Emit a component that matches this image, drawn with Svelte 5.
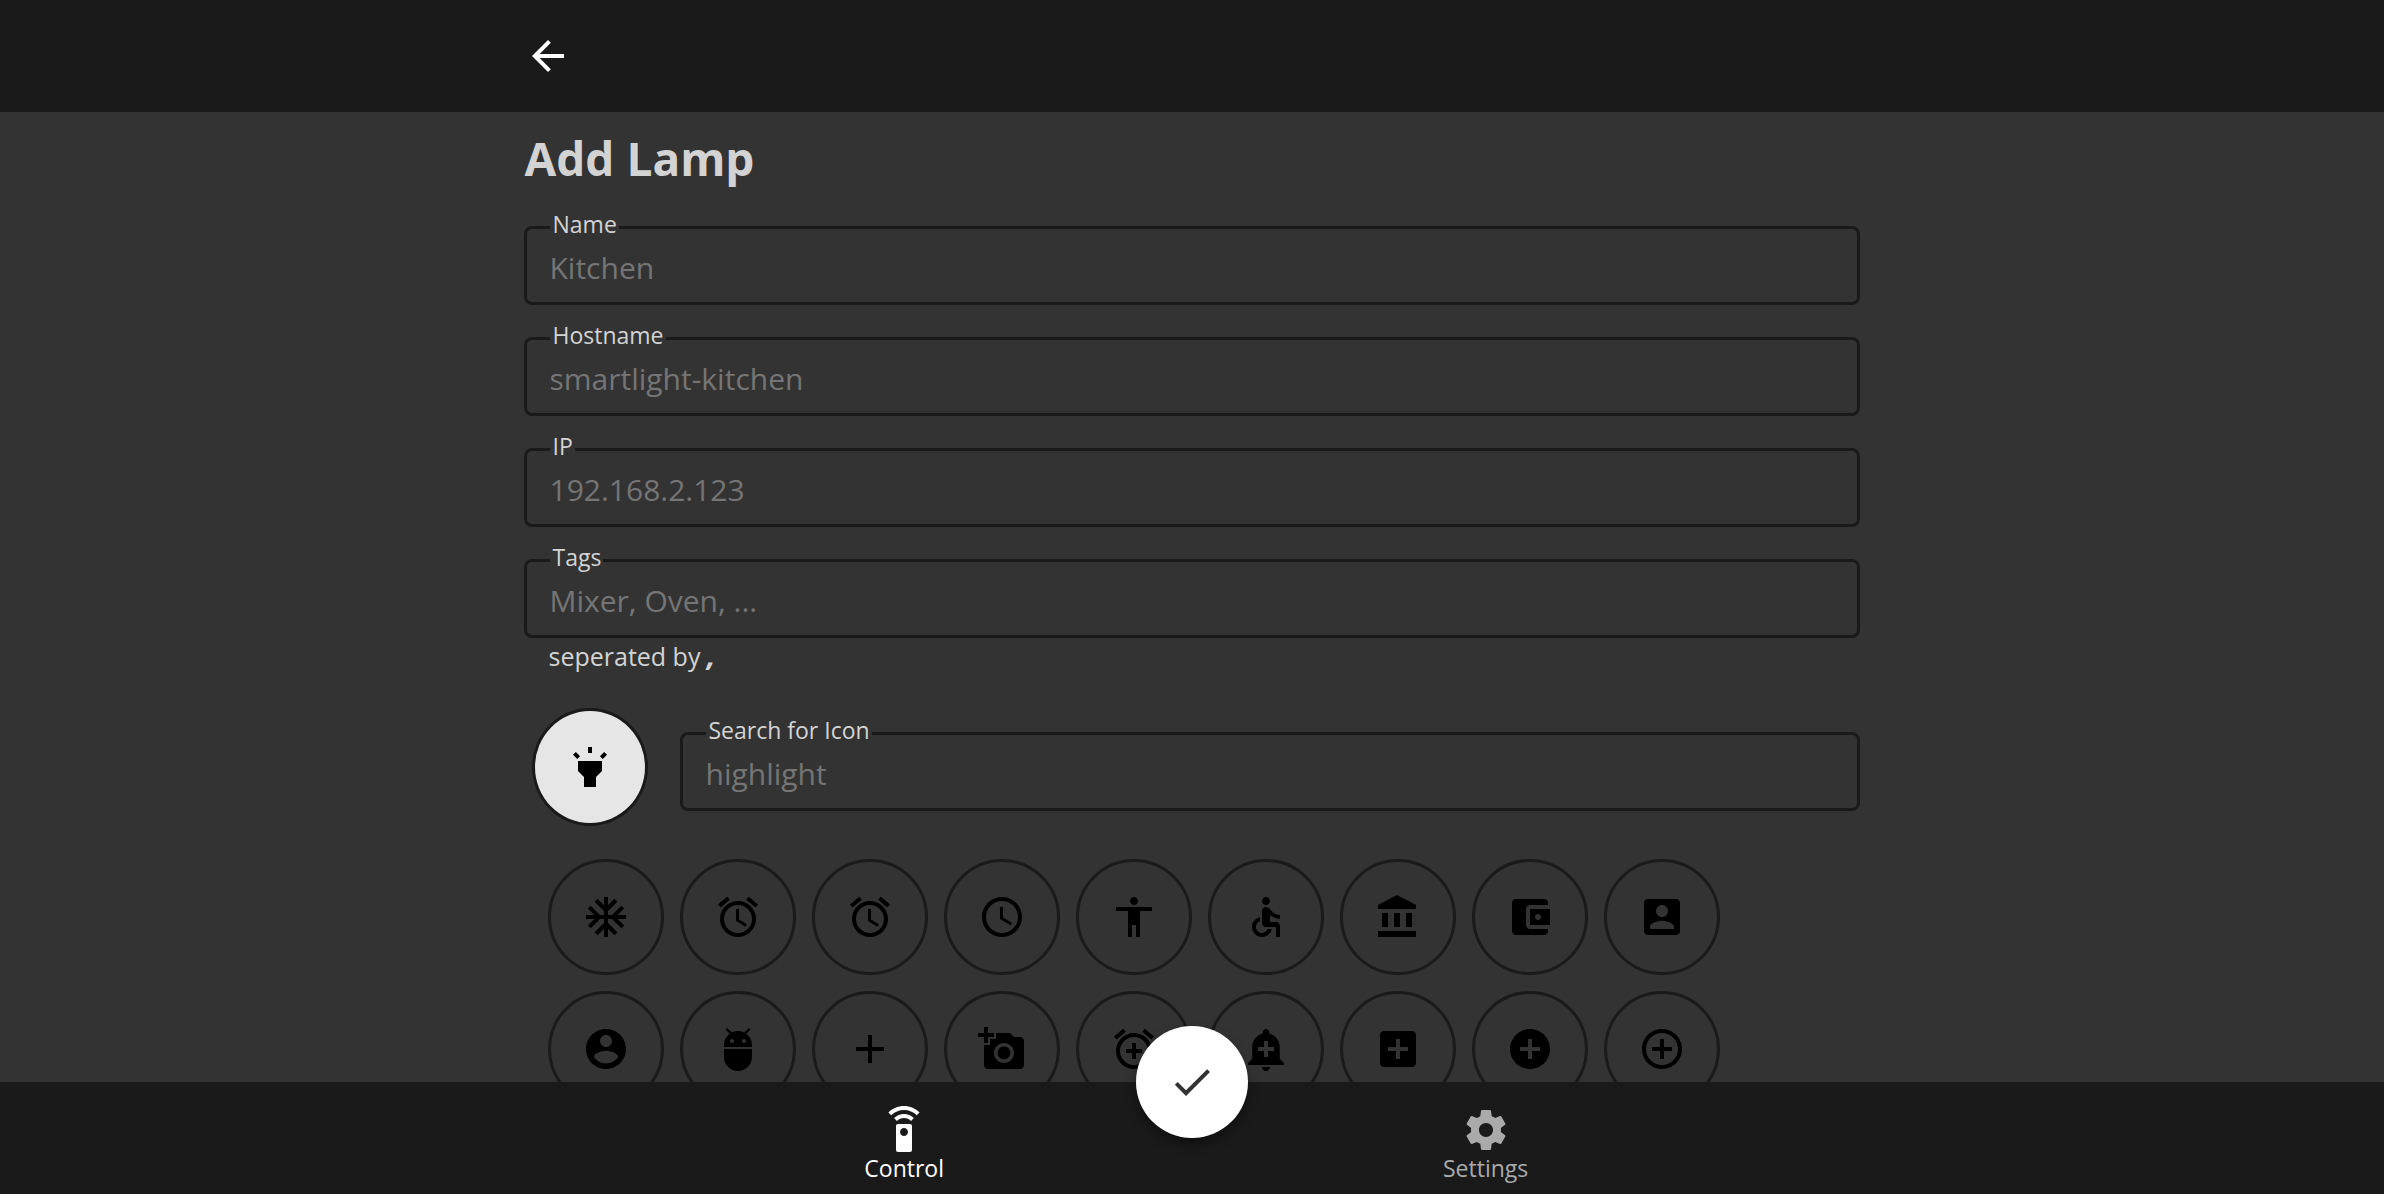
<script>
  const fields = [
    { id: 'name', label: 'Name', placeholder: 'Kitchen' },
    { id: 'hostname', label: 'Hostname', placeholder: 'smartlight-kitchen' },
    { id: 'ip', label: 'IP', placeholder: '192.168.2.123' },
    { id: 'tags', label: 'Tags', placeholder: 'Mixer, Oven, ...' },
  ];

  const highlight =
    'M6 14l3 3v5h6v-5l3-3V9H6zm5-12h2v3h-2zM3.5 5.875L4.914 4.46l2.12 2.122L5.62 7.997zm13.46.71l2.123-2.12 1.414 1.414L18.375 8z';
  const alarm =
    'M22 5.72l-4.6-3.86-1.29 1.53 4.6 3.86L22 5.72zM7.88 3.39L6.6 1.86 2 5.71l1.29 1.53 4.59-3.85zM12.5 8H11v6l4.75 2.85.75-1.23-4-2.37V8zM12 4c-4.97 0-9 4.03-9 9s4.02 9 9 9c4.97 0 9-4.03 9-9s-4.03-9-9-9zm0 16c-3.87 0-7-3.13-7-7s3.13-7 7-7 7 3.13 7 7-3.13 7-7 7z';

  const icons = [
    { name: 'ac unit', path: 'M22 11h-4.17l3.24-3.24-1.41-1.42L15 11h-2V9l4.66-4.66-1.42-1.41L13 6.17V2h-2v4.17L7.76 2.93 6.34 4.34 11 9v2H9L4.34 6.34 2.93 7.76 6.17 11H2v2h4.17l-3.24 3.24 1.41 1.42L9 13h2v2l-4.66 4.66 1.42 1.41L11 17.83V22h2v-4.17l3.24 3.24 1.42-1.41L13 15v-2h2l4.66 4.66 1.41-1.42L17.83 13H22z' },
    { name: 'access alarm', path: alarm },
    { name: 'access alarms', path: alarm },
    { name: 'access time', path: 'M11.99 2C6.47 2 2 6.48 2 12s4.47 10 9.99 10C17.52 22 22 17.52 22 12S17.52 2 11.99 2zM12 20c-4.42 0-8-3.58-8-8s3.58-8 8-8 8 3.58 8 8-3.58 8-8 8zM12.5 7H11v6l5.25 3.15.75-1.23-4.5-2.67z' },
    { name: 'accessibility', path: 'M12 2c1.1 0 2 .9 2 2s-.9 2-2 2-2-.9-2-2 .9-2 2-2zm9 7h-6v13h-2v-6h-2v6H9V9H3V7h18v2z' },
    { name: 'accessible', path: 'M12 2c1.1 0 2 .9 2 2s-.9 2-2 2-2-.9-2-2 .9-2 2-2zM19 13v-2c-1.54.02-3.09-.75-4.07-1.83l-1.29-1.43c-.17-.19-.38-.34-.61-.45-.01 0-.01-.01-.02-.01H13c-.35-.2-.75-.3-1.19-.26C10.76 7.11 10 8.04 10 9.09V15c0 1.1.9 2 2 2h5v5h2v-5.5c0-1.1-.9-2-2-2h-3v-3.45c1.29 1.07 3.25 1.94 5 1.95zm-6.17 5c-.41 1.16-1.52 2-2.83 2-1.66 0-3-1.34-3-3 0-1.31.84-2.41 2-2.83V12.1c-2.28.46-4 2.48-4 4.9 0 2.76 2.24 5 5 5 2.42 0 4.44-1.72 4.9-4h-2.07z' },
    { name: 'account balance', path: 'M4 10v7h3v-7H4zm6 0v7h3v-7h-3zM2 22h19v-3H2v3zm14-12v7h3v-7h-3zm-4.5-9L2 6v2h19V6l-9.5-5z' },
    { name: 'account balance wallet', path: 'M21 18v1c0 1.1-.9 2-2 2H5c-1.11 0-2-.9-2-2V5c0-1.1.89-2 2-2h14c1.1 0 2 .9 2 2v1h-9c-1.11 0-2 .9-2 2v8c0 1.1.89 2 2 2h9zm-9-2h10V8H12v8zm4-2.5c-.83 0-1.5-.67-1.5-1.5s.67-1.5 1.5-1.5 1.5.67 1.5 1.5-.67 1.5-1.5 1.5z' },
    { name: 'account box', path: 'M3 5v14c0 1.1.89 2 2 2h14c1.1 0 2-.9 2-2V5c0-1.1-.9-2-2-2H5c-1.11 0-2 .9-2 2zm12 4c0 1.66-1.34 3-3 3s-3-1.34-3-3 1.34-3 3-3 3 1.34 3 3zm-9 8c0-2 4-3.1 6-3.1s6 1.1 6 3.1v1H6v-1z' },
    { name: 'account circle', path: 'M12 2C6.48 2 2 6.48 2 12s4.48 10 10 10 10-4.48 10-10S17.52 2 12 2zm0 3c1.66 0 3 1.34 3 3s-1.34 3-3 3-3-1.34-3-3 1.34-3 3-3zm0 14.2c-2.5 0-4.71-1.28-6-3.22.03-1.99 4-3.08 6-3.08 1.99 0 5.97 1.09 6 3.08-1.29 1.94-3.5 3.22-6 3.22z' },
    { name: 'adb', path: 'M5 16c0 3.87 3.13 7 7 7s7-3.13 7-7v-4H5v4zM16.12 4.37l2.1-2.1-.82-.83-2.3 2.31C14.16 3.28 13.12 3 12 3s-2.16.28-3.09.75L6.6 1.44l-.82.83 2.1 2.1C6.14 5.64 5 7.68 5 10v1h14v-1c0-2.32-1.14-4.36-2.88-5.63zM9 9c-.55 0-1-.45-1-1s.45-1 1-1 1 .45 1 1-.45 1-1 1zm6 0c-.55 0-1-.45-1-1s.45-1 1-1 1 .45 1 1-.45 1-1 1z' },
    { name: 'add', path: 'M19 13h-6v6h-2v-6H5v-2h6V5h2v6h6v2z' },
    { name: 'add a photo', path: 'M3 4V1h2v3h3v2H5v3H3V6H0V4h3zm3 6V7h3V4h7l1.83 2H21c1.1 0 2 .9 2 2v12c0 1.1-.9 2-2 2H5c-1.1 0-2-.9-2-2V10h3zm7 9c2.76 0 5-2.24 5-5s-2.24-5-5-5-5 2.24-5 5 2.24 5 5 5zm-3.2-5c0 1.77 1.43 3.2 3.2 3.2s3.2-1.43 3.2-3.2-1.43-3.2-3.2-3.2-3.2 1.43-3.2 3.2z' },
    { name: 'add alarm', path: 'M7.88 3.39L6.6 1.86 2 5.71l1.29 1.53 4.59-3.85zM22 5.72l-4.6-3.86-1.29 1.53 4.6 3.86L22 5.72zM12 4c-4.97 0-9 4.03-9 9s4.02 9 9 9c4.97 0 9-4.03 9-9s-4.03-9-9-9zm0 16c-3.87 0-7-3.13-7-7s3.13-7 7-7 7 3.13 7 7-3.13 7-7 7zm1-11h-2v3H8v2h3v3h2v-3h3v-2h-3V9z' },
    { name: 'add alert', path: 'M10.01 21.01c0 1.1.89 1.99 1.99 1.99s1.99-.89 1.99-1.99h-3.98zm8.87-4.19V11c0-3.25-2.25-5.97-5.29-6.69v-.72C13.59 2.71 12.88 2 12 2s-1.59.71-1.59 1.59v.72C7.37 5.03 5.12 7.75 5.12 11v5.82L3 18.94V20h18v-1.06l-2.12-2.12zM16 13.01h-3v3h-2v-3H8V11h3V8h2v3h3v2.01z' },
    { name: 'add box', path: 'M19 3H5c-1.11 0-2 .9-2 2v14c0 1.1.89 2 2 2h14c1.1 0 2-.9 2-2V5c0-1.1-.9-2-2-2zm-2 10h-4v4h-2v-4H7v-2h4V7h2v4h4v2z' },
    { name: 'add circle', path: 'M12 2C6.48 2 2 6.48 2 12s4.48 10 10 10 10-4.48 10-10S17.52 2 12 2zm5 11h-4v4h-2v-4H7v-2h4V7h2v4h4v2z' },
    { name: 'add circle outline', path: 'M13 7h-2v4H7v2h4v4h2v-4h4v-2h-4V7zm-1-5C6.48 2 2 6.48 2 12s4.48 10 10 10 10-4.48 10-10S17.52 2 12 2zm0 18c-4.41 0-8-3.59-8-8s3.59-8 8-8 8 3.59 8 8-3.59 8-8 8z' },
  ];
</script>

{#snippet icon(path)}
  <svg class="icon" viewBox="0 0 24 24" aria-hidden="true"><path d={path} /></svg>
{/snippet}

{#snippet field(id, label, placeholder)}
  <div class="field">
    <label for={id}>{label}</label>
    <input {id} type="text" {placeholder} />
  </div>
{/snippet}

<div class="app">
  <header>
    <div class="column">
      <button class="back" type="button" aria-label="Back">
        {@render icon('M20 11H7.83l5.59-5.59L12 4l-8 8 8 8 1.41-1.41L7.83 13H20v-2z')}
      </button>
    </div>
  </header>

  <main>
    <form class="column" id="lamp">
      <h1>Add Lamp</h1>
      <div class="fields">
        {#each fields as f}
          {@render field(f.id, f.label, f.placeholder)}
        {/each}
      </div>
      <p class="hint">seperated by <b>,</b></p>

      <div class="search">
        <span class="selected">{@render icon(highlight)}</span>
        {@render field('icon', 'Search for Icon', 'highlight')}
      </div>

      <div class="icons">
        {#each icons as item}
          <button type="button" aria-label={item.name}>{@render icon(item.path)}</button>
        {/each}
      </div>
    </form>
  </main>

  <nav>
    <a class="active" href="#control">
      {@render icon('M15 9H9c-.55 0-1 .45-1 1v12c0 .55.45 1 1 1h6c.55 0 1-.45 1-1V10c0-.55-.45-1-1-1zm-3 6c-1.1 0-2-.9-2-2s.9-2 2-2 2 .9 2 2-.9 2-2 2zM7.05 6.05l1.41 1.41C9.37 6.56 10.62 6 12 6s2.63.56 3.54 1.46l1.41-1.41C15.68 4.78 13.93 4 12 4s-3.68.78-4.95 2.05zM12 0C8.96 0 6.21 1.23 4.22 3.22l1.41 1.41C7.26 3.01 9.51 2 12 2s4.74 1.01 6.36 2.64l1.41-1.41C17.79 1.23 15.04 0 12 0z')}
      <span>Control</span>
    </a>
    <button class="confirm" type="submit" form="lamp" aria-label="Save lamp">
      {@render icon('M9 16.17L4.83 12l-1.42 1.41L9 19 21 7l-1.41-1.41z')}
    </button>
    <a href="#settings">
      {@render icon('M19.43 12.98c.04-.32.07-.64.07-.98s-.03-.66-.07-.98l2.11-1.65c.19-.15.24-.42.12-.64l-2-3.46c-.12-.22-.39-.3-.61-.22l-2.49 1c-.52-.4-1.08-.73-1.69-.98l-.38-2.65C14.46 2.18 14.25 2 14 2h-4c-.25 0-.46.18-.49.42l-.38 2.65c-.61.25-1.17.59-1.69.98l-2.49-1c-.23-.09-.49 0-.61.22l-2 3.46c-.13.22-.07.49.12.64l2.11 1.65c-.04.32-.07.65-.07.98s.03.66.07.98l-2.11 1.65c-.19.15-.24.42-.12.64l2 3.46c.12.22.39.3.61.22l2.49-1c.52.4 1.08.73 1.69.98l.38 2.65c.03.24.24.42.49.42h4c.25 0 .46-.18.49-.42l.38-2.65c.61-.25 1.17-.59 1.69-.98l2.49 1c.23.09.49 0 .61-.22l2-3.46c.12-.22.07-.49-.12-.64l-2.11-1.65zM12 15.5c-1.93 0-3.5-1.57-3.5-3.5s1.57-3.5 3.5-3.5 3.5 1.57 3.5 3.5-1.57 3.5-3.5 3.5z')}
      <span>Settings</span>
    </a>
  </nav>
</div>

<style>
  :global(body) {
    background: #333;
  }

  .app {
    display: flex;
    flex-direction: column;
    height: 100vh;
    color: #d3d3d3;
    font-family: 'Segoe UI', 'Open Sans', sans-serif;
    font-size: 23px;
  }

  .app * {
    box-sizing: border-box;
  }

  button {
    display: flex;
    align-items: center;
    justify-content: center;
    padding: 0;
    border: 0;
    background: none;
    cursor: pointer;
  }

  .icon {
    display: block;
    width: 48px;
    height: 48px;
    fill: currentColor;
  }

  .column {
    width: 56%;
    margin: 0 auto;
  }

  header {
    flex: none;
    padding: 32px 0;
    background: #1a1a1a;
  }

  .back {
    color: #fff;
  }

  main {
    flex: 1;
    min-height: 0;
    overflow-y: auto;
    scrollbar-width: none;
  }

  h1 {
    margin: 14px 0 36px;
    font-size: 46px;
    line-height: 64px;
    font-weight: 700;
  }

  .fields {
    display: flex;
    flex-direction: column;
    gap: 32px;
  }

  .field {
    position: relative;
    flex: 1;
  }

  label {
    position: absolute;
    top: -18px;
    left: 26px;
    padding: 0 2px;
    background: #333;
    line-height: 32px;
  }

  input {
    display: block;
    width: 100%;
    height: 79px;
    padding: 4px 22px 0;
    border: 3px solid #1a1a1a;
    border-radius: 8px;
    background: transparent;
    color: #d3d3d3;
    font: inherit;
    font-size: 30px;
  }

  input::placeholder {
    color: #757575;
    opacity: 1;
  }

  .hint {
    margin: 0 24px 34px;
    font-size: 25px;
    line-height: 36px;
  }

  .hint b {
    font-size: 30px;
    font-style: italic;
    line-height: 24px;
  }

  .search {
    display: flex;
    align-items: center;
    gap: 32px;
    padding-left: 8px;
  }

  .search .field {
    margin-top: 8px;
  }

  .selected {
    display: flex;
    align-items: center;
    justify-content: center;
    width: 116px;
    height: 118px;
    border: 3px solid #1a1a1a;
    border-radius: 50%;
    background: #e6e6e6;
    color: #000;
  }

  .icons {
    display: grid;
    grid-template-columns: repeat(auto-fill, 116px);
    gap: 16px;
    padding: 33px 24px;
  }

  .icons button {
    height: 116px;
    border: 3px solid #1a1a1a;
    border-radius: 50%;
    color: #000;
  }

  nav {
    display: grid;
    grid-template-columns: 1fr 112px 1fr;
    column-gap: 192px;
    flex: none;
    height: 112px;
    background: #1a1a1a;
    position: relative;
  }

  nav a {
    display: flex;
    flex-direction: column;
    align-items: center;
    justify-self: start;
    padding: 24px 0 0 3px;
    color: #aaa;
    line-height: 28px;
    text-decoration: none;
  }

  nav .active {
    justify-self: end;
    color: #fff;
  }

  .confirm {
    width: 112px;
    height: 112px;
    margin-top: -56px;
    border-radius: 50%;
    background: #fff;
    box-shadow: 0 6px 12px rgba(0, 0, 0, 0.4);
    color: #333;
  }
</style>
